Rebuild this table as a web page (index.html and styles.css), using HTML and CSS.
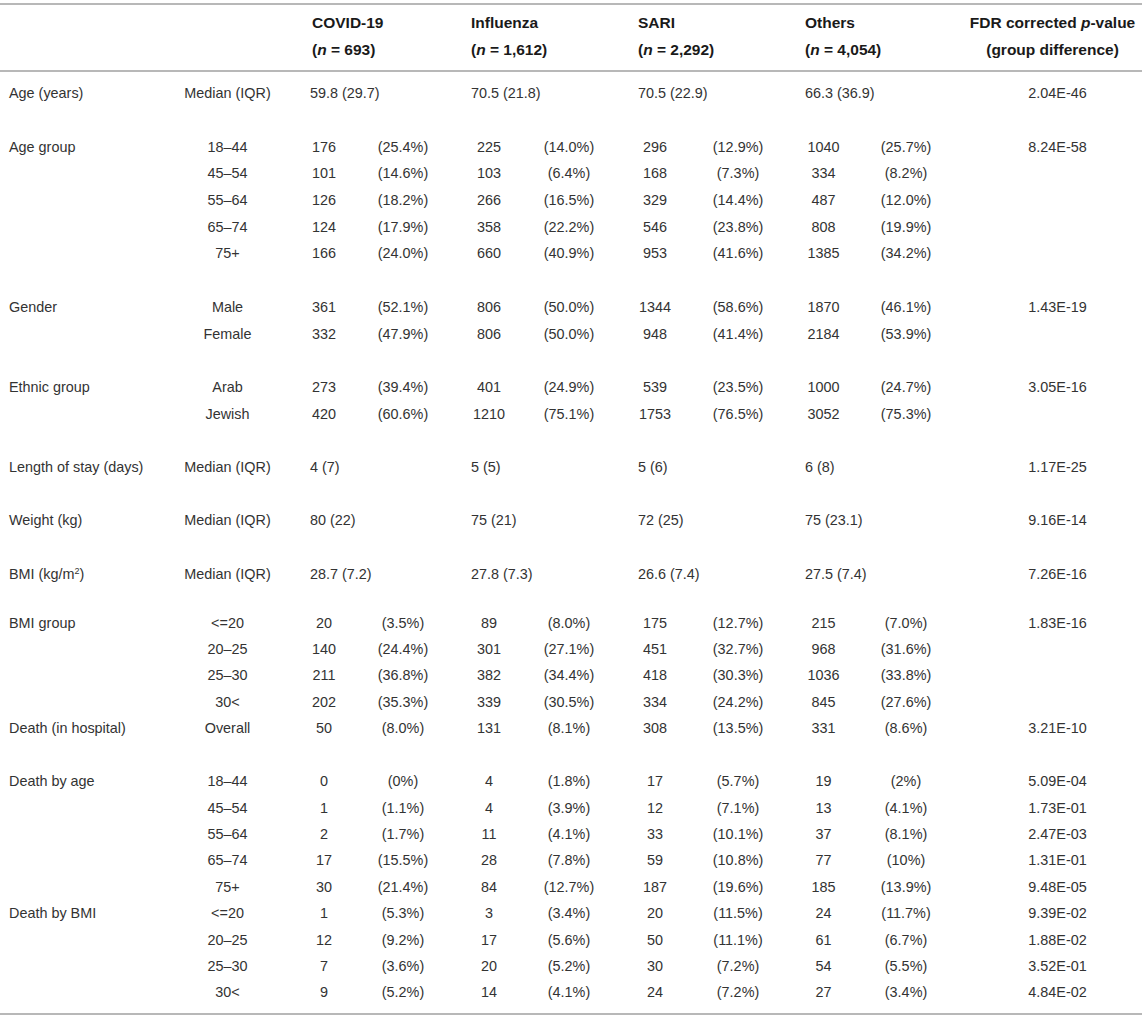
FILE: index.html
```html
<!DOCTYPE html>
<html>
<head>
<meta charset="utf-8">
<link rel="stylesheet" href="styles.css">
</head>
<body>
<table class="t">
<colgroup>
<col class="c-lbl"><col class="c-sub">
<col class="c-n1"><col class="c-p1">
<col class="c-n2"><col class="c-p2">
<col class="c-n3"><col class="c-p3">
<col class="c-n4"><col class="c-p4">
<col class="c-fdr">
</colgroup>
<thead>
<tr class="h1">
<th></th><th></th>
<th colspan="2" class="grp g1">COVID-19</th>
<th colspan="2" class="grp g2">Influenza</th>
<th colspan="2" class="grp g3">SARI</th>
<th colspan="2" class="grp g4">Others</th>
<th class="fdr">FDR corrected <i>p</i>-value</th>
</tr>
<tr class="h2">
<th></th><th></th>
<th colspan="2" class="grp g1">(<i>n</i> = 693)</th>
<th colspan="2" class="grp g2">(<i>n</i> = 1,612)</th>
<th colspan="2" class="grp g3">(<i>n</i> = 2,292)</th>
<th colspan="2" class="grp g4">(<i>n</i> = 4,054)</th>
<th class="fdr">(group difference)</th>
</tr>
</thead>
<tbody>
<tr class="top"><td colspan="11"></td></tr>

<tr><td class="lbl">Age (years)</td><td class="sub">Median (IQR)</td><td colspan="2" class="med g1">59.8 (29.7)</td><td colspan="2" class="med g2">70.5 (21.8)</td><td colspan="2" class="med g3">70.5 (22.9)</td><td colspan="2" class="med g4">66.3 (36.9)</td><td class="p">2.04E-46</td></tr>
<tr class="gap"><td colspan="11"></td></tr>

<tr><td class="lbl">Age group</td><td class="sub">18–44</td><td class="n">176</td><td class="pc">(25.4%)</td><td class="n">225</td><td class="pc">(14.0%)</td><td class="n">296</td><td class="pc">(12.9%)</td><td class="n">1040</td><td class="pc">(25.7%)</td><td class="p">8.24E-58</td></tr>
<tr><td class="lbl"></td><td class="sub">45–54</td><td class="n">101</td><td class="pc">(14.6%)</td><td class="n">103</td><td class="pc">(6.4%)</td><td class="n">168</td><td class="pc">(7.3%)</td><td class="n">334</td><td class="pc">(8.2%)</td><td class="p"></td></tr>
<tr><td class="lbl"></td><td class="sub">55–64</td><td class="n">126</td><td class="pc">(18.2%)</td><td class="n">266</td><td class="pc">(16.5%)</td><td class="n">329</td><td class="pc">(14.4%)</td><td class="n">487</td><td class="pc">(12.0%)</td><td class="p"></td></tr>
<tr><td class="lbl"></td><td class="sub">65–74</td><td class="n">124</td><td class="pc">(17.9%)</td><td class="n">358</td><td class="pc">(22.2%)</td><td class="n">546</td><td class="pc">(23.8%)</td><td class="n">808</td><td class="pc">(19.9%)</td><td class="p"></td></tr>
<tr><td class="lbl"></td><td class="sub">75+</td><td class="n">166</td><td class="pc">(24.0%)</td><td class="n">660</td><td class="pc">(40.9%)</td><td class="n">953</td><td class="pc">(41.6%)</td><td class="n">1385</td><td class="pc">(34.2%)</td><td class="p"></td></tr>
<tr class="gap"><td colspan="11"></td></tr>

<tr><td class="lbl">Gender</td><td class="sub">Male</td><td class="n">361</td><td class="pc">(52.1%)</td><td class="n">806</td><td class="pc">(50.0%)</td><td class="n">1344</td><td class="pc">(58.6%)</td><td class="n">1870</td><td class="pc">(46.1%)</td><td class="p">1.43E-19</td></tr>
<tr><td class="lbl"></td><td class="sub">Female</td><td class="n">332</td><td class="pc">(47.9%)</td><td class="n">806</td><td class="pc">(50.0%)</td><td class="n">948</td><td class="pc">(41.4%)</td><td class="n">2184</td><td class="pc">(53.9%)</td><td class="p"></td></tr>
<tr class="gap"><td colspan="11"></td></tr>

<tr><td class="lbl">Ethnic group</td><td class="sub">Arab</td><td class="n">273</td><td class="pc">(39.4%)</td><td class="n">401</td><td class="pc">(24.9%)</td><td class="n">539</td><td class="pc">(23.5%)</td><td class="n">1000</td><td class="pc">(24.7%)</td><td class="p">3.05E-16</td></tr>
<tr><td class="lbl"></td><td class="sub">Jewish</td><td class="n">420</td><td class="pc">(60.6%)</td><td class="n">1210</td><td class="pc">(75.1%)</td><td class="n">1753</td><td class="pc">(76.5%)</td><td class="n">3052</td><td class="pc">(75.3%)</td><td class="p"></td></tr>
<tr class="gap"><td colspan="11"></td></tr>

<tr><td class="lbl">Length of stay (days)</td><td class="sub">Median (IQR)</td><td colspan="2" class="med g1">4 (7)</td><td colspan="2" class="med g2">5 (5)</td><td colspan="2" class="med g3">5 (6)</td><td colspan="2" class="med g4">6 (8)</td><td class="p">1.17E-25</td></tr>
<tr class="gap"><td colspan="11"></td></tr>

<tr><td class="lbl">Weight (kg)</td><td class="sub">Median (IQR)</td><td colspan="2" class="med g1">80 (22)</td><td colspan="2" class="med g2">75 (21)</td><td colspan="2" class="med g3">72 (25)</td><td colspan="2" class="med g4">75 (23.1)</td><td class="p">9.16E-14</td></tr>
<tr class="gap"><td colspan="11"></td></tr>

<tr><td class="lbl">BMI (kg/m<sup>2</sup>)</td><td class="sub">Median (IQR)</td><td colspan="2" class="med g1">28.7 (7.2)</td><td colspan="2" class="med g2">27.8 (7.3)</td><td colspan="2" class="med g3">26.6 (7.4)</td><td colspan="2" class="med g4">27.5 (7.4)</td><td class="p">7.26E-16</td></tr>
<tr class="gap short"><td colspan="11"></td></tr>

<tr class="b"><td class="lbl">BMI group</td><td class="sub">&lt;=20</td><td class="n">20</td><td class="pc">(3.5%)</td><td class="n">89</td><td class="pc">(8.0%)</td><td class="n">175</td><td class="pc">(12.7%)</td><td class="n">215</td><td class="pc">(7.0%)</td><td class="p">1.83E-16</td></tr>
<tr class="b"><td class="lbl"></td><td class="sub">20–25</td><td class="n">140</td><td class="pc">(24.4%)</td><td class="n">301</td><td class="pc">(27.1%)</td><td class="n">451</td><td class="pc">(32.7%)</td><td class="n">968</td><td class="pc">(31.6%)</td><td class="p"></td></tr>
<tr class="b"><td class="lbl"></td><td class="sub">25–30</td><td class="n">211</td><td class="pc">(36.8%)</td><td class="n">382</td><td class="pc">(34.4%)</td><td class="n">418</td><td class="pc">(30.3%)</td><td class="n">1036</td><td class="pc">(33.8%)</td><td class="p"></td></tr>
<tr class="b"><td class="lbl"></td><td class="sub">30&lt;</td><td class="n">202</td><td class="pc">(35.3%)</td><td class="n">339</td><td class="pc">(30.5%)</td><td class="n">334</td><td class="pc">(24.2%)</td><td class="n">845</td><td class="pc">(27.6%)</td><td class="p"></td></tr>
<tr class="b"><td class="lbl">Death (in hospital)</td><td class="sub">Overall</td><td class="n">50</td><td class="pc">(8.0%)</td><td class="n">131</td><td class="pc">(8.1%)</td><td class="n">308</td><td class="pc">(13.5%)</td><td class="n">331</td><td class="pc">(8.6%)</td><td class="p">3.21E-10</td></tr>
<tr class="gap b"><td colspan="11"></td></tr>

<tr class="b"><td class="lbl">Death by age</td><td class="sub">18–44</td><td class="n">0</td><td class="pc">(0%)</td><td class="n">4</td><td class="pc">(1.8%)</td><td class="n">17</td><td class="pc">(5.7%)</td><td class="n">19</td><td class="pc">(2%)</td><td class="p">5.09E-04</td></tr>
<tr class="b"><td class="lbl"></td><td class="sub">45–54</td><td class="n">1</td><td class="pc">(1.1%)</td><td class="n">4</td><td class="pc">(3.9%)</td><td class="n">12</td><td class="pc">(7.1%)</td><td class="n">13</td><td class="pc">(4.1%)</td><td class="p">1.73E-01</td></tr>
<tr class="b"><td class="lbl"></td><td class="sub">55–64</td><td class="n">2</td><td class="pc">(1.7%)</td><td class="n">11</td><td class="pc">(4.1%)</td><td class="n">33</td><td class="pc">(10.1%)</td><td class="n">37</td><td class="pc">(8.1%)</td><td class="p">2.47E-03</td></tr>
<tr class="b"><td class="lbl"></td><td class="sub">65–74</td><td class="n">17</td><td class="pc">(15.5%)</td><td class="n">28</td><td class="pc">(7.8%)</td><td class="n">59</td><td class="pc">(10.8%)</td><td class="n">77</td><td class="pc">(10%)</td><td class="p">1.31E-01</td></tr>
<tr class="b"><td class="lbl"></td><td class="sub">75+</td><td class="n">30</td><td class="pc">(21.4%)</td><td class="n">84</td><td class="pc">(12.7%)</td><td class="n">187</td><td class="pc">(19.6%)</td><td class="n">185</td><td class="pc">(13.9%)</td><td class="p">9.48E-05</td></tr>
<tr class="b"><td class="lbl">Death by BMI</td><td class="sub">&lt;=20</td><td class="n">1</td><td class="pc">(5.3%)</td><td class="n">3</td><td class="pc">(3.4%)</td><td class="n">20</td><td class="pc">(11.5%)</td><td class="n">24</td><td class="pc">(11.7%)</td><td class="p">9.39E-02</td></tr>
<tr class="b"><td class="lbl"></td><td class="sub">20–25</td><td class="n">12</td><td class="pc">(9.2%)</td><td class="n">17</td><td class="pc">(5.6%)</td><td class="n">50</td><td class="pc">(11.1%)</td><td class="n">61</td><td class="pc">(6.7%)</td><td class="p">1.88E-02</td></tr>
<tr class="b"><td class="lbl"></td><td class="sub">25–30</td><td class="n">7</td><td class="pc">(3.6%)</td><td class="n">20</td><td class="pc">(5.2%)</td><td class="n">30</td><td class="pc">(7.2%)</td><td class="n">54</td><td class="pc">(5.5%)</td><td class="p">3.52E-01</td></tr>
<tr class="b"><td class="lbl"></td><td class="sub">30&lt;</td><td class="n">9</td><td class="pc">(5.2%)</td><td class="n">14</td><td class="pc">(4.1%)</td><td class="n">24</td><td class="pc">(7.2%)</td><td class="n">27</td><td class="pc">(3.4%)</td><td class="p">4.84E-02</td></tr>
<tr class="bottom"><td colspan="11"></td></tr>
</tbody>
</table>
</body>
</html>
```

FILE: styles.css
```css
html, body {
  margin: 0;
  padding: 0;
  background: #ffffff;
}

body {
  font-family: "Liberation Sans", Arial, Helvetica, sans-serif;
  font-size: 14.4px;
  color: #333333;
}

.t {
  margin-top: 3px;
  width: 1142px;
  border-collapse: collapse;
  table-layout: fixed;
  border-top: 2px solid #b8b8b8;
  border-bottom: 2px solid #b8b8b8;
}

.c-lbl { width: 180px; }
.c-sub { width: 120px; }
.c-n1 { width: 48px; }
.c-p1 { width: 110px; }
.c-n2 { width: 62px; }
.c-p2 { width: 98px; }
.c-n3 { width: 74px; }
.c-p3 { width: 92px; }
.c-n4 { width: 79px; }
.c-p4 { width: 86px; }
.c-fdr { width: 193px; }

thead th {
  font-weight: bold;
  font-size: 15.5px;
  color: #1a1a1a;
  padding: 0;
  height: 27px;
  line-height: 27px;
  vertical-align: middle;
  white-space: nowrap;
}

thead .h1 th { padding-top: 4px; }
thead .h2 th { padding-bottom: 7px; }
thead .h2 { border-bottom: 2px solid #b8b8b8; }

th.grp { text-align: left; }
th.fdr { text-align: center; padding-left: 14px; }

.g1 { padding-left: 12px; }
.g2 { padding-left: 13px; }
.g3 { padding-left: 20px; }
.g4 { padding-left: 21px; }

tbody td {
  padding: 0;
  height: 26.7px;
  line-height: 16px;
  vertical-align: middle;
  white-space: nowrap;
}

tbody tr.b td { height: 26.43px; }

tbody tr.top td { height: 8px; }
tbody tr.gap.short td { height: 22.3px; }
tbody tr.bottom td { height: 7px; }

td.lbl { text-align: left; padding-left: 9px; }
td.sub { text-align: center; padding-right: 25px; }
td.n { text-align: center; }
td.pc { text-align: center; }
td.med { text-align: left; }
td.med.g1 { padding-left: 10px; }
td.p { text-align: center; padding-left: 24px; }

sup {
  font-size: 9px;
  line-height: 0;
  vertical-align: 5px;
}
```
